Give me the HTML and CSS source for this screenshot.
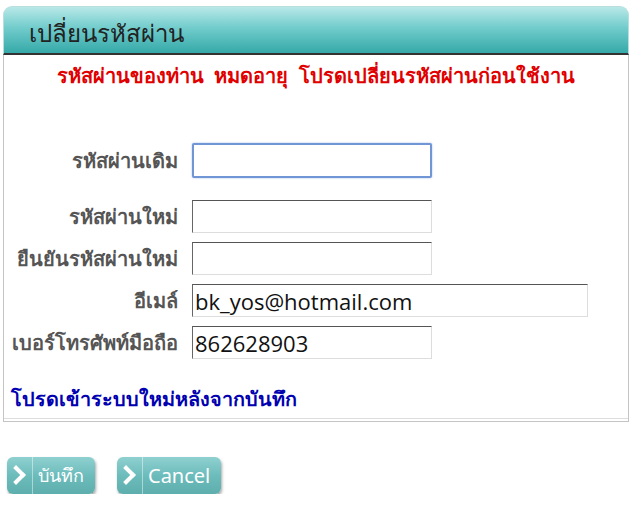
FILE: index.html
```html
<!DOCTYPE html>
<html lang="th">
<head>
    <meta charset="UTF-8">
    <meta name="viewport" content="width=device-width, initial-scale=1.0">
    <title>เปลี่ยนรหัสผ่าน</title>
    <link rel="stylesheet" href="styles.css">
</head>
<body>
    <div class="panel">
        <div class="panel-head">เปลี่ยนรหัสผ่าน</div>
        <div class="panel-body">
            <p class="warn">รหัสผ่านของท่าน &nbsp;หมดอายุ &nbsp;โปรดเปลี่ยนรหัสผ่านก่อนใช้งาน</p>
            <form id="pw-form" class="pw-form">
                <div class="row first">
                    <label for="old-pw">รหัสผ่านเดิม</label>
                    <input type="password" id="old-pw" class="field focus">
                </div>
                <div class="row">
                    <label for="new-pw">รหัสผ่านใหม่</label>
                    <input type="password" id="new-pw" class="field">
                </div>
                <div class="row">
                    <label for="confirm-pw">ยืนยันรหัสผ่านใหม่</label>
                    <input type="password" id="confirm-pw" class="field">
                </div>
                <div class="row">
                    <label for="email">อีเมล์</label>
                    <input type="text" id="email" class="field wide" value="bk_yos@hotmail.com">
                </div>
                <div class="row">
                    <label for="mobile">เบอร์โทรศัพท์มือถือ</label>
                    <input type="text" id="mobile" class="field" value="862628903">
                </div>
            </form>
            <p class="note">โปรดเข้าระบบใหม่หลังจากบันทึก</p>
        </div>
    </div>
    <div class="actions">
        <button type="submit" form="pw-form" class="btn"><span class="arrow"></span><span class="txt">บันทึก</span></button>
        <button type="button" class="btn cancel"><span class="arrow"></span><span class="txt">Cancel</span></button>
    </div>
</body>
</html>
```

FILE: styles.css
```css
body {
    margin: 0;
    padding: 0;
    background-color: #fff;
    font-family: "Noto Sans", "Open Sans", sans-serif;
}

.panel {
    margin: 6px 0 0 3px;
    width: 626px;
}

.panel-head {
    height: 49px;
    box-sizing: border-box;
    padding: 7px 0 0 25px;
    border: 1px solid #b9dede;
    border-radius: 9px 9px 0 0;
    background: linear-gradient(to bottom, #b9e8e8 0%, #72cccc 45%, #35a9a8 100%);
    border-bottom: 2px solid #333;
    color: #222;
    font-size: 24px;
}

.panel-body {
    height: 367px;
    box-sizing: border-box;
    border: 1px solid #c4c4c4;
    border-top: none;
    box-shadow: inset 0 -2px 0 #fff, inset 0 -3px 0 #ddd;
    padding-top: 7px;
}

.warn {
    margin: 0;
    text-align: center;
    color: #e00000;
    font-size: 20px;
    font-weight: bold;
    line-height: 28px;
}

.pw-form {
    margin-top: 53px;
}

.row {
    display: flex;
    align-items: center;
    gap: 14px;
    margin-bottom: 9px;
}

.row.first {
    margin-bottom: 22px;
}

.row label {
    width: 174px;
    text-align: right;
    color: #555;
    font-size: 20px;
    font-weight: bold;
    line-height: 28px;
}

.field {
    width: 240px;
    height: 33px;
    box-sizing: border-box;
    margin: 0;
    padding: 0 2px;
    border: 1px solid #999;
    border-top-color: #555;
    border-left-color: #666;
    border-right-color: #ddd;
    border-bottom-color: #ddd;
    font-family: "Open Sans", "Noto Sans", sans-serif;
    font-size: 22px;
    color: #111;
}

.field.focus {
    height: 35px;
    border: 2px solid #7196d6;
    border-radius: 2px;
    box-shadow: 0 0 2px #9bb8e8;
}

.field.wide {
    width: 396px;
}

.note {
    margin: 24px 0 0 7px;
    color: #0000b0;
    font-size: 19.8px;
    font-weight: bold;
}

.actions {
    display: flex;
    gap: 22px;
    margin: 35px 0 0 7px;
}

.btn {
    display: flex;
    align-items: center;
    height: 37px;
    padding: 0 9px 0 0;
    border: none;
    border-radius: 6px;
    background: linear-gradient(to bottom, #8fd0d0 0%, #6dbcbc 50%, #5eaeae 100%);
    box-shadow: 1px 2px 3px rgba(0, 0, 0, 0.35);
    color: #fff;
    font-family: "Noto Sans", "Open Sans", sans-serif;
    font-size: 18px;
    cursor: pointer;
}

.btn.cancel {
    font-size: 20px;
}

.arrow {
    position: relative;
    width: 25px;
    height: 37px;
    border-right: 1px solid rgba(255, 255, 255, 0.45);
    margin-right: 5px;
}

.arrow::before {
    content: "";
    position: absolute;
    left: 2px;
    top: 11px;
    width: 10px;
    height: 10px;
    border-top: 4px solid #fff;
    border-right: 4px solid #fff;
    transform: rotate(45deg);
}

.txt {
    padding-right: 2px;
}
```
